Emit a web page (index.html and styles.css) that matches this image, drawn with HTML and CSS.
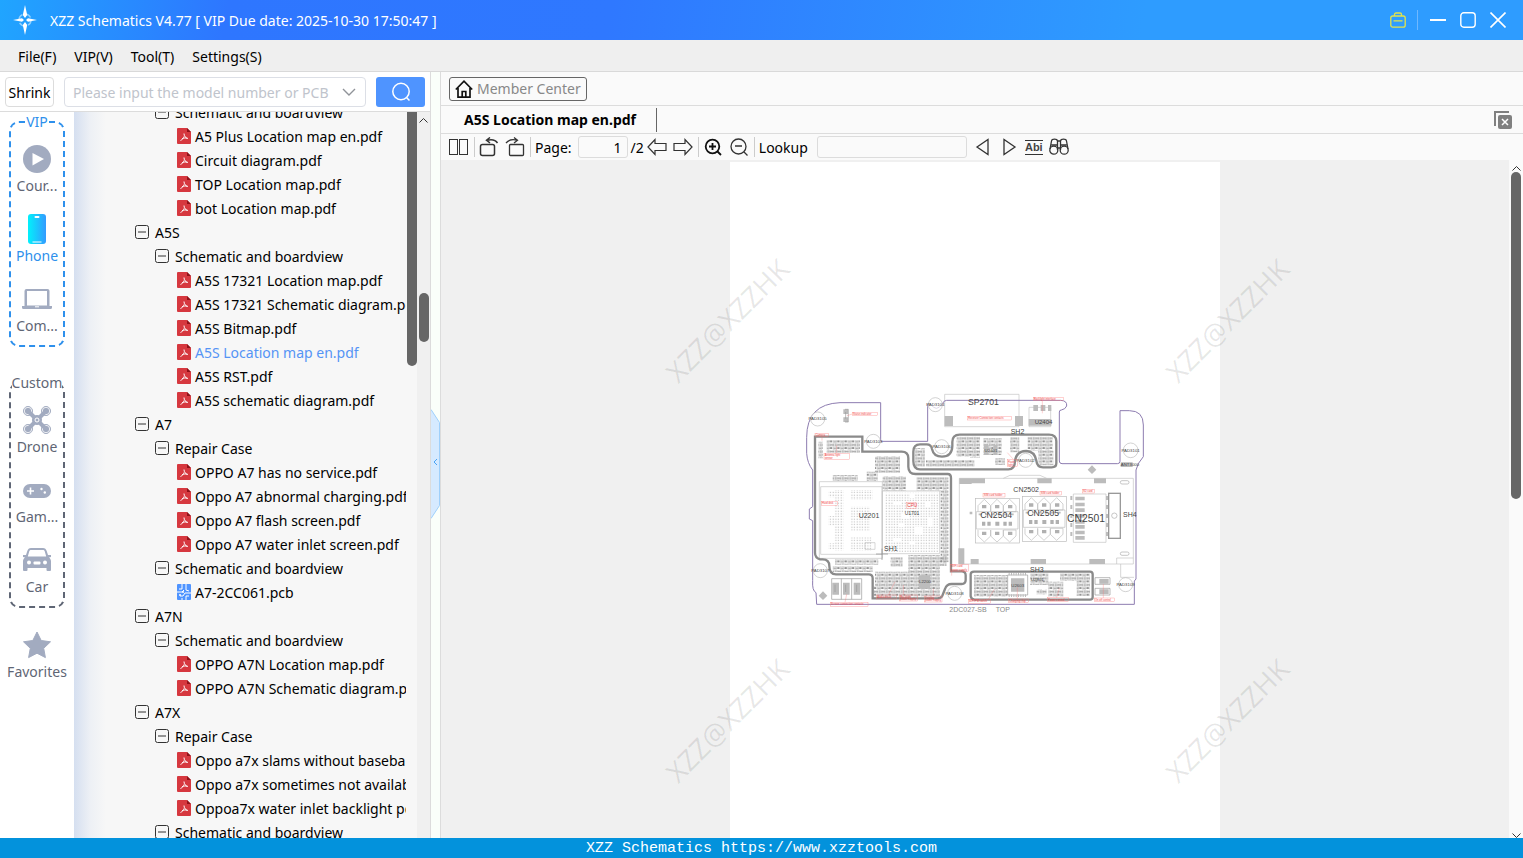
FILE: index.html
```html
<!DOCTYPE html>
<html lang="en">
<head>
    <meta charset="UTF-8">
    <meta name="viewport" content="width=device-width, initial-scale=1.0">
    <title>XZZ Schematics</title>
    <link rel="stylesheet" href="styles.css">
</head>
<body>
    <!-- shared icons -->
    <svg class="sprite" aria-hidden="true">
        <symbol id="pdf" viewBox="0 0 14 16">
            <path d="M1 0h9l4 4v11a1 1 0 0 1-1 1H1a1 1 0 0 1-1-1V1a1 1 0 0 1 1-1z" fill="#d6383f"/>
            <path d="M10 0l4 4h-4z" fill="#8e1219"/>
            <path d="M7 5.500c0 2.500 1.500 4.500 4 5M7 8.500c-.5 1.500-1.500 3-3.500 4M5 10.800c2-.9 3.500-1 5-.6" fill="none" stroke="#fff"/>
        </symbol>
        <symbol id="pcb" viewBox="0 0 14 16">
            <rect width="14" height="16" rx="1" fill="#4f94ff"/>
            <path d="M5 0v5H2M9 0v6l3 1M0 8h5l2-2M14 9H8l-2 3H3M9 16v-4h3M5 16v-2" fill="none" stroke="#fff"/>
            <circle cx="6" cy="8" r="1" fill="#fff"/>
            <circle cx="3" cy="11" r="1" fill="#fff"/>
        </symbol>
        <symbol id="minus" viewBox="0 0 14 14">
            <rect x=".5" y=".5" width="13" height="13" rx="2" fill="none" stroke="#333"/>
            <path d="M3 7h8" stroke="#333"/>
        </symbol>
    </svg>

    <header class="titlebar">
        <svg class="logo" viewBox="0 0 26 30">
            <circle cx="13" cy="15" r="6" fill="none" stroke="#8fd0ff" stroke-width="1.500" stroke-dasharray="6 3.400"/>
            <path d="M13 0l2.200 10-2.200 3-2.200-3zM13 30l2.200-10-2.200-3-2.200 3zM1 15l9-1.800 2 1.800-2 1.800zM25 15l-9-1.800-2 1.800 2 1.800z" fill="#fff"/>
        </svg>
        <h1>XZZ Schematics V4.77 [ VIP Due date: 2025-10-30 17:50:47 ]</h1>
        <div class="window-buttons">
            <button type="button" class="kit" aria-label="Toolbox">
                <svg width="16" height="16" viewBox="0 0 16 16" fill="none" stroke="#e2e34b" stroke-width="1.300"><rect x=".8" y="4" width="14.400" height="11.200" rx="2"/><path d="M4.500 4V2.500A1.500 1.500 0 0 1 6 1h4a1.500 1.500 0 0 1 1.500 1.500V4M3.500 8.800h9"/></svg>
            </button>
            <button type="button" aria-label="Minimize">
                <svg width="16" height="16" viewBox="0 0 16 16" stroke="#fff" stroke-width="2"><path d="M0 8h16"/></svg>
            </button>
            <button type="button" aria-label="Maximize">
                <svg width="16" height="16" viewBox="0 0 16 16" fill="none" stroke="#fff" stroke-width="1.400"><rect x=".8" y=".8" width="14.400" height="14.400" rx="3"/></svg>
            </button>
            <button type="button" aria-label="Close">
                <svg width="16" height="16" viewBox="0 0 16 16" stroke="#fff" stroke-width="1.600"><path d="M.5.5l15 15M15.500.5l-15 15"/></svg>
            </button>
        </div>
    </header>

    <nav class="menubar">
        <a href="#">File(F)</a>
        <a href="#">VIP(V)</a>
        <a href="#">Tool(T)</a>
        <a href="#">Settings(S)</a>
    </nav>

    <main class="workspace">
        <section class="left">
            <form class="search">
                <button type="button" class="shrink">Shrink</button>
                <div class="combo">
                    <input type="text" aria-label="Model number" placeholder="Please input the model number or PCB">
                    <svg width="14" height="8" viewBox="0 0 14 8" fill="none" stroke="#909399" stroke-width="1.400"><path d="M1 1l6 6 6-6"/></svg>
                </div>
                <button type="button" class="go" aria-label="Search">
                    <svg width="20" height="20" viewBox="0 0 20 20" fill="none" stroke="#fff" stroke-width="1.500"><circle cx="10" cy="9.500" r="8.200"/><path d="M15.500 15.500l3 3"/></svg>
                </button>
            </form>

            <div class="browser">
                <div class="side">
                    <fieldset class="group vip">
                        <legend>VIP</legend>
                        <a href="#" class="item">
                            <svg viewBox="0 0 30 30"><circle cx="15" cy="15" r="14" fill="#a2abc0"/><path d="M10.500 9v12.500L22 15z" fill="#fff"/></svg>
                            Cour...
                        </a>
                        <a href="#" class="item active">
                            <svg viewBox="0 0 30 30">
                                <defs><linearGradient id="blue"><stop offset="0" stop-color="#02f1fb"/><stop offset="1" stop-color="#339bff"/></linearGradient></defs>
                                <rect x="6" y="0" width="18" height="30" rx="3" fill="url(#blue)"/>
                                <rect x="12.500" y="2" width="5" height="2" rx="1" fill="#fff"/>
                                <path d="M10.500 28h9" stroke="#fff"/>
                            </svg>
                            Phone
                        </a>
                        <a href="#" class="item">
                            <svg viewBox="0 0 30 30" fill="#a2abc0"><path d="M4.500 5h21a2 2 0 0 1 2 2v15h2.500v1.500a1.500 1.500 0 0 1-1.500 1.500h-27A1.500 1.500 0 0 1 0 23.500V22h2.500V7a2 2 0 0 1 2-2zM5 7v14.500h20V7z" fill-rule="evenodd"/><path d="M13 22.800h4" stroke="#fff"/></svg>
                            Com...
                        </a>
                    </fieldset>
                    <fieldset class="group">
                        <legend>Custom</legend>
                        <a href="#" class="item">
                            <svg viewBox="0 0 30 30" stroke="#a2abc0">
                                <g fill="#a2abc0"><circle cx="6" cy="6" r="4.500"/><circle cx="24" cy="6" r="4.500"/><circle cx="6" cy="24" r="4.500"/><circle cx="24" cy="24" r="4.500"/></g>
                                <g fill="none" stroke="#fff" stroke-width=".8"><circle cx="6" cy="6" r="3.700"/><circle cx="24" cy="6" r="3.700"/><circle cx="6" cy="24" r="3.700"/><circle cx="24" cy="24" r="3.700"/></g>
                                <path d="M6 6l18 18M24 6L6 24" stroke-width="4"/>
                                <circle cx="15" cy="15" r="4.500" fill="#a2abc0"/><circle cx="15" cy="15" r="2" fill="#a2abc0" stroke="#fff"/>
                            </svg>
                            Drone
                        </a>
                        <a href="#" class="item">
                            <svg viewBox="0 0 30 30"><rect x="1" y="9" width="28" height="14" rx="7" fill="#a2abc0"/><path d="M8.500 12.500v7M5 16h7" stroke="#fff" stroke-width="1.600"/><circle cx="19.500" cy="14" r="1.200" fill="#fff"/><circle cx="22.800" cy="17.500" r="1.200" fill="#fff"/></svg>
                            Gam...
                        </a>
                        <a href="#" class="item">
                            <svg viewBox="0 0 30 30" fill="#a2abc0">
                                <path d="M9 3h12c2 0 3 1 3.700 3l1.300 4h3v2l-2 .5c1.300 1 2 2 2 4V25a1 1 0 0 1-1 1h-2.500a1 1 0 0 1-1-1v-2h-19v2a1 1 0 0 1-1 1H2a1 1 0 0 1-1-1v-8.500c0-2 .7-3 2-4L1 12v-2h3l1.300-4C6 4 7 3 9 3zm0 2C8 5 7.500 5.500 7.200 6.500L5.800 11.500h18.400l-1.400-5C22.500 5.500 22 5 21 5z" fill-rule="evenodd"/>
                                <g fill="#fff"><circle cx="7" cy="17.500" r="2"/><circle cx="23" cy="17.500" r="2"/><rect x="11.500" y="16.500" width="7" height="3" rx="1"/></g>
                            </svg>
                            Car
                        </a>
                    </fieldset>
                    <a href="#" class="item favorites">
                        <svg viewBox="0 0 30 30"><path d="M15 2l4.200 8.500 9.300 1.300-6.800 6.500 1.700 9.300L15 23.200l-8.400 4.400 1.700-9.300-6.800-6.500 9.300-1.300z" fill="#a2abc0" stroke="#a2abc0" stroke-linejoin="round"/></svg>
                        Favorites
                    </a>
                </div>

                <div class="tree">
                    <ul>
                        <li class="folder"><button type="button"><svg><use href="#minus"/></svg>Schematic and boardview</button></li>
                        <li class="file"><a href="#"><svg><use href="#pdf"/></svg>A5 Plus Location map en.pdf</a></li>
                        <li class="file"><a href="#"><svg><use href="#pdf"/></svg>Circuit diagram.pdf</a></li>
                        <li class="file"><a href="#"><svg><use href="#pdf"/></svg>TOP Location map.pdf</a></li>
                        <li class="file"><a href="#"><svg><use href="#pdf"/></svg>bot Location map.pdf</a></li>
                        <li class="model"><button type="button"><svg><use href="#minus"/></svg>A5S</button></li>
                        <li class="folder"><button type="button"><svg><use href="#minus"/></svg>Schematic and boardview</button></li>
                        <li class="file"><a href="#"><svg><use href="#pdf"/></svg>A5S 17321 Location map.pdf</a></li>
                        <li class="file"><a href="#"><svg><use href="#pdf"/></svg>A5S 17321 Schematic diagram.pdf</a></li>
                        <li class="file"><a href="#"><svg><use href="#pdf"/></svg>A5S Bitmap.pdf</a></li>
                        <li class="file selected"><a href="#"><svg><use href="#pdf"/></svg>A5S Location map en.pdf</a></li>
                        <li class="file"><a href="#"><svg><use href="#pdf"/></svg>A5S RST.pdf</a></li>
                        <li class="file"><a href="#"><svg><use href="#pdf"/></svg>A5S schematic diagram.pdf</a></li>
                        <li class="model"><button type="button"><svg><use href="#minus"/></svg>A7</button></li>
                        <li class="folder"><button type="button"><svg><use href="#minus"/></svg>Repair Case</button></li>
                        <li class="file"><a href="#"><svg><use href="#pdf"/></svg>OPPO A7 has no service.pdf</a></li>
                        <li class="file"><a href="#"><svg><use href="#pdf"/></svg>Oppo A7 abnormal charging.pdf</a></li>
                        <li class="file"><a href="#"><svg><use href="#pdf"/></svg>Oppo A7 flash screen.pdf</a></li>
                        <li class="file"><a href="#"><svg><use href="#pdf"/></svg>Oppo A7 water inlet screen.pdf</a></li>
                        <li class="folder"><button type="button"><svg><use href="#minus"/></svg>Schematic and boardview</button></li>
                        <li class="file"><a href="#"><svg><use href="#pcb"/></svg>A7-2CC061.pcb</a></li>
                        <li class="model"><button type="button"><svg><use href="#minus"/></svg>A7N</button></li>
                        <li class="folder"><button type="button"><svg><use href="#minus"/></svg>Schematic and boardview</button></li>
                        <li class="file"><a href="#"><svg><use href="#pdf"/></svg>OPPO A7N Location map.pdf</a></li>
                        <li class="file"><a href="#"><svg><use href="#pdf"/></svg>OPPO A7N Schematic diagram.pdf</a></li>
                        <li class="model"><button type="button"><svg><use href="#minus"/></svg>A7X</button></li>
                        <li class="folder"><button type="button"><svg><use href="#minus"/></svg>Repair Case</button></li>
                        <li class="file"><a href="#"><svg><use href="#pdf"/></svg>Oppo a7x slams without baseband.pdf</a></li>
                        <li class="file"><a href="#"><svg><use href="#pdf"/></svg>Oppo a7x sometimes not available.pdf</a></li>
                        <li class="file"><a href="#"><svg><use href="#pdf"/></svg>Oppoa7x water inlet backlight pdf</a></li>
                        <li class="folder"><button type="button"><svg><use href="#minus"/></svg>Schematic and boardview</button></li>
                    </ul>
                </div>
                <div class="inner-bar"><span></span></div>
                <div class="scrollbar">
                    <svg width="9" height="5" viewBox="0 0 9 5" fill="none" stroke="#333"><path d="M.5 4.500l4-4 4 4"/></svg>
                    <span class="thumb"></span>
                </div>
            </div>
        </section>

        <div class="splitter">
            <button type="button" aria-label="Collapse">
                <svg width="9" height="110" viewBox="0 0 9 110"><path d="M0 .5l8.500 13v83L0 109.500" fill="#d6eaff" stroke="#9fd0fb"/><path d="M6 50l-3 3 3 3" fill="none" stroke="#4aa3f5"/></svg>
            </button>
        </div>

        <section class="right">
            <div class="member-row">
                <button type="button" class="member">
                    <svg width="18" height="18" viewBox="0 0 18 18" fill="none" stroke="#111" stroke-width="1.700"><path d="M.8 9.500L9 1.200l8.200 8.300M3 8v9.200h12V8M7.200 17v-5.500h3.600V17"/></svg>
                    Member Center
                </button>
            </div>
            <div class="tabs">
                <a href="#" class="tab">A5S Location map en.pdf</a>
                <button type="button" class="close-all" aria-label="Close all">
                    <svg width="18" height="18" viewBox="0 0 18 18"><path d="M1 15V1h14" fill="none" stroke="#808080" stroke-width="2"/><rect x="4" y="4" width="14" height="14" rx="2" fill="#808080"/><path d="M8 8l6 6M14 8l-6 6" stroke="#fff" stroke-width="1.500"/></svg>
                </button>
            </div>
            <div class="toolbar">
                <button type="button" aria-label="Two pages">
                    <svg width="20" height="20" viewBox="0 0 20 20" fill="none" stroke="#333"><rect x=".5" y="2.500" width="8" height="15"/><rect x="10.500" y="2.500" width="8" height="15"/></svg>
                </button>
                <i></i>
                <button type="button" aria-label="Rotate left">
                    <svg width="20" height="20" viewBox="0 0 20 20" fill="none" stroke="#333" stroke-width="1.500"><rect x="1.500" y="7.500" width="14" height="11" rx="2"/><path d="M18.500 6C17 3.500 13 2 8 3.200M11 .5L7.500 3.200 11 6"/></svg>
                </button>
                <button type="button" aria-label="Rotate right">
                    <svg width="20" height="20" viewBox="0 0 20 20" fill="none" stroke="#333" stroke-width="1.300"><rect x="4.500" y="7.500" width="14" height="11" rx="1"/><path d="M1 6C3 3.500 7 2 12 3.200M9 .5l3.500 2.700L9 6"/></svg>
                </button>
                <i></i>
                <label for="page">Page:</label>
                <input type="text" id="page" class="page-no" value="1">
                <span>/2</span>
                <button type="button" aria-label="Previous page">
                    <svg width="20" height="20" viewBox="0 0 20 20" fill="none" stroke="#333" stroke-width="1.200"><path d="M1 10l7-7.500v4h11v7H8v4z"/></svg>
                </button>
                <button type="button" aria-label="Next page">
                    <svg width="20" height="20" viewBox="0 0 20 20" fill="none" stroke="#333" stroke-width="1.200"><path d="M19 10l-7-7.500v4H1v7h11v4z"/></svg>
                </button>
                <i></i>
                <button type="button" aria-label="Zoom in">
                    <svg width="20" height="20" viewBox="0 0 20 20" fill="none" stroke="#111" stroke-width="1.800"><circle cx="9.500" cy="9.500" r="6.800"/><path d="M14.500 14.500l3.500 3.500M6 9.500h7M9.500 6v7"/></svg>
                </button>
                <button type="button" aria-label="Zoom out">
                    <svg width="20" height="20" viewBox="0 0 20 20" fill="none" stroke="#333" stroke-width="1.300"><circle cx="9.500" cy="9.500" r="7.500"/><path d="M15 15l3.500 3.500M6 9h7"/></svg>
                </button>
                <i></i>
                <label for="lookup">Lookup</label>
                <input type="text" id="lookup" class="lookup">
                <button type="button" aria-label="Find previous">
                    <svg width="20" height="20" viewBox="0 0 20 20" fill="none" stroke="#333" stroke-width="1.300"><path d="M4 10L15 2.500v15z"/></svg>
                </button>
                <button type="button" aria-label="Find next">
                    <svg width="20" height="20" viewBox="0 0 20 20" fill="none" stroke="#333" stroke-width="1.300"><path d="M16 10L5 2.500v15z"/></svg>
                </button>
                <button type="button" class="abi">Abi</button>
                <button type="button" aria-label="Find all">
                    <svg width="20" height="20" viewBox="0 0 20 20" fill="none" stroke="#333" stroke-width="1.300"><circle cx="4.800" cy="13.200" r="4"/><circle cx="15.200" cy="13.200" r="4"/><path d="M1 12L2.500 4C3 1.500 8 1.500 8.500 4v9M19 12l-1.500-8C17 1.500 12 1.500 11.500 4v9M8.500 4h3M8.500 11h3M2.500 8h6M11.500 8h6"/></svg>
                </button>
            </div>

            <div class="viewer">
                <div class="canvas">
                    <div class="sheet">
                        <!-- drawn at 3 units per pixel -->
                        <svg class="board" viewBox="0 0 1050 690">
                            <defs>
                                <pattern id="parts" width="22" height="20" patternUnits="userSpaceOnUse">
                                    <path d="M1 2h5v6H1zM9 2h5v6H9zM17 1h4v8h-4zM1 12h8v5H1zM12 12h3v6h-3zM18 12h3v6h-3z" fill="#aaa"/>
                                    <path d="M6 5h3M15 15h3M2 14h6" stroke="#555" stroke-width="2"/>
                                    <path d="M0 1h15v8H0zM11 11h11v8H11z" fill="none" stroke="#bbb"/>
                                </pattern>
                                <pattern id="balls" width="8" height="8" patternUnits="userSpaceOnUse"><rect x="2" y="2" width="3" height="3" fill="#b0b0b0"/></pattern>
                                <g id="sim">
                                    <rect x="0" y="0" width="132" height="134" fill="none" stroke="#bbb" stroke-width="2"/>
                                    <path d="M8 40V22L27 3l19 19v18M46 40V22L65 3l19 19v18M84 40V22l19-19 19 19v18zM8 95v18l19 18 19-18V95M46 95v18l19 18 19-18V95M84 95v18l19 18 19-18V95zM3 40h125v52H3z" fill="none" stroke="#bbb" stroke-width="2"/>
                                    <path d="M20 20h13v10H20zM59 20h13v10H59zM98 20h13v10H98zM20 100h13v10H20zM59 100h13v10H59zM98 100h13v10H98zM20 70h10v12H20zM36 70h10v12H36zM60 70h12v12H60zM84 70h10v12H84zM100 70h10v12h-10z" fill="#b0b0b0"/>
                                    <path d="M10 48h112" stroke="#bbb" stroke-width="5" stroke-dasharray="10 9"/>
                                </g>
                            </defs>

                            <g fill="url(#parts)">
                                <path d="M55 155h14v50H55zM80 150h100v38H80zM225 198h75v50h-75zM345 175h30v55h-30zM98 255h75v18H98zM200 245h33v28h-33zM248 258h70v45h-70zM350 262h95v40h-95zM422 302h23v215h-23z"/>
                                <path d="M105 508h130v16H105zM98 528h120v18H98zM272 502h36v28h-36zM225 545h100v68H225zM325 495h95v125h-95zM380 498h60v30h-60zM220 588h110v35H220z"/>
                                <path d="M378 210h145v20H378zM470 140h70v60h-70zM510 175h30v28h-30zM550 145h55v50h-55zM585 205h30v20h-30zM630 142h28v45h-28zM683 140h75v42h-75zM715 182h45v44h-45z"/>
                                <path d="M522 555h100v65H522zM690 550h55v35H690zM710 598h30v15h-30zM745 575h45v45h-45zM780 550h90v22h-90zM830 570h40v48h-40z"/>
                            </g>

                            <!-- BGA chips -->
                            <g fill="none" stroke="#c2c2c2" stroke-width="2">
                                <path d="M58 275h189v230H58zM62 290h184v203H62zM195 458h30v20h-30zM247 303h172v188H247z"/>
                                <path d="M434 13h223v97H434zM687 52h65v58h-65z"/>
                                <path d="M478 265h522v257H478zM610 265l20-9h90l20 9M820 312h98v145h-98zM950 522v-18h50M962 522v40h40"/>
                            </g>
                            <g fill="url(#balls)">
                                <path d="M104 300h26v182h-26zM152 300h66v30h-66zM152 350h58v72h-58zM152 442h64v40h-64zM86 304h18v18H86zM86 378h18v30H86zM86 460h18v18H86zM255 308h160v178H255z"/>
                            </g>
                            <g fill="#fff"><path d="M304 370h24v16h-24zM345 410h24v24h-24zM375 335h16v16h-16zM280 336h24v10h-24zM296 400h18v12h-18zM280 444h24v10h-24zM328 452h18v10h-18zM384 380h14v30h-14zM330 312h14v12h-14z"/></g>
                            <path d="M228 492h36M246 476v34" stroke="#888" stroke-width="2"/>

                            <!-- pads and contacts -->
                            <g fill="#bcbcbc">
                                <path d="M434 78h25v30h-25zM645 78h24v30h-24zM478 265h37v17h-37zM515 265h40v15h-40zM712 265h43v15h-43zM882 265h36v15h-36zM475 475h18v47h-18zM512 507h24v15h-24zM692 507h46v15h-46zM868 507h47v15h-47z"/>
                                <path d="M700 45h14v18h-14zM722 45h14v18h-14zM744 45h10v18h-10zM686 87h68v20h-68zM130 58h14v14h-14zM130 82h14v14h-14zM552 165h14v30h-14zM580 165h12v30h-12z"/>
                                <path d="M826 320h28v11h-28zM826 338h28v11h-28zM826 355h28v11h-28zM826 372h28v11h-28zM826 390h28v11h-28zM826 405h28v11h-28zM826 422h28v11h-28zM826 438h28v11h-28z"/>
                                <path d="M811 318h6v12h-6zM811 345h6v12h-6zM811 372h6v12h-6zM811 399h6v12h-6zM811 426h6v12h-6zM918 318h6v12h-6zM918 345h6v12h-6zM918 372h6v12h-6zM918 399h6v12h-6zM918 426h6v12h-6z"/>
                                <path d="M97 578h20v36H97zM129 578h20v36h-20zM161 578h20v36h-20zM633 565h40v40h-40zM356 556h34v40h-34zM898 567h28v14h-28zM898 598h28v14h-28zM962 217h36v14h-36z"/>
                                <path d="M69 604l13 13-13 13-13-13zM876 226l13 13-13 13-13-13zM509 365h8v8h-8z"/>
                            </g>
                            <path d="M95 566h90v62H95zM124 566v62M155 566v62M105 584v22M137 584v22M170 584v22M135 58h10v38h-10M137 66v20M623 555h60v60h-60zM885 563h45v20h-45zM885 595h45v20h-45z" fill="none" stroke="#999" stroke-width="2"/>
                            <path d="M626 552h54M626 617h54" stroke="#bbb" stroke-width="8" stroke-dasharray="3 4"/>
                            <use href="#sim" x="526" y="325"/>
                            <use href="#sim" x="667" y="320"/>
                            <rect x="926" y="310" width="35" height="135" fill="none" stroke="#999" stroke-width="4"/>
                            <g fill="none" stroke="#aaa" stroke-width="2"><circle cx="943" cy="377" r="8"/><rect x="961" y="272" width="26" height="10" rx="5"/><rect x="961" y="486" width="26" height="10" rx="5"/></g>

                            <!-- shields -->
                            <g fill="none" stroke="#8a8a8a" stroke-width="7">
                                <path d="M45 140h142v45h118q20 0 20 20v25q0 22 22 22h96q10 0 10 12v280h32q12 0 12 12v14q0 12-12 12h-30q-15 0-20 15l-8 20q-4 8-15 8H218v-60q0-12-12-12H108q-20 0-20-25 0-20-20-20h-8q-15-5-15-20z"/>
                                <path d="M340 185q0-22 20-22h20q14 0 16 14 5 23 30 23 30 0 31-32v-12q0-22 22-22h268q22 0 22 20v66q0 12-14 12h-26q-18 0-20-20-5-28-30-29-30 0-34 30 0 25-20 25H360q-20 0-20-25z"/>
                                <path d="M522 545h348q8 0 8 8v68q0 8-8 8H524q-10 0-12-10v-66q0-8 10-8z"/>
                            </g>

                            <!-- board outline -->
                            <path d="M50 643h953v-70l5-6V240q4-20 22-40v-95q0-43-42-43h-28v152q0 7-8 7H786q-8 0-8-8V66q0-6 6-6 12-2 16-12 2-16-18-17H440q-8 0-13 10-18 28-36 0-8-4-8 8v105H242V38H120Q20 42 20 142v48q2 30 18 50v110l-10 7v30l10 5v180q-2 30 10 36z" fill="none" stroke="#8d7cb0" stroke-width="3"/>

                            <g fill="#fff" fill-opacity=".7" stroke="#bbb" stroke-width="2">
                                <circle cx="53" cy="87" r="21"/><circle cx="220" cy="154" r="21"/><circle cx="406" cy="44" r="21"/><circle cx="425" cy="170" r="21"/><circle cx="61" cy="542" r="21"/><circle cx="464" cy="610" r="21"/><circle cx="677" cy="211" r="21"/><circle cx="992" cy="181" r="22"/><circle cx="977" cy="584" r="21"/>
                            </g>

                            <g class="part-names">
                                <g font-size="13" text-anchor="middle">
                                    <text x="53" y="91">PAD3105</text><text x="220" y="158">PAD3103</text><text x="406" y="48">PAD3104</text><text x="425" y="174">PAD3106</text><text x="61" y="546">PAD3107</text><text x="464" y="615">PAD3108</text><text x="677" y="215">PAD3102</text><text x="992" y="186">PAD3101</text><text x="977" y="588">PAD3109</text><text x="990" y="228">ANT3000</text>
                                    <text x="375" y="580">L2200</text><text x="573" y="186">U2401</text><text x="653" y="590">U2603</text><text x="712" y="574">U2801</text>
                                </g>
                                <text x="176" y="383" font-size="21">U2201</text>
                                <text x="314" y="376" font-size="15">U1701</text>
                                <text x="252" y="482" font-size="21">SH1</text>
                                <text x="504" y="44" font-size="26">SP2701</text>
                                <text x="632" y="131" font-size="21">SH2</text>
                                <text x="704" y="102" font-size="18">U2404</text>
                                <text x="640" y="305" font-size="21">CN2502</text>
                                <text x="541" y="383" font-size="26">CN2504</text>
                                <text x="682" y="378" font-size="26">CN2505</text>
                                <text x="801" y="395" font-size="31">CN2501</text>
                                <text x="969" y="380" font-size="21">SH4</text>
                                <text x="690" y="547" font-size="21">SH3</text>
                                <text x="448" y="665" font-size="21" fill="#888">2DC027-SB</text>
                                <text x="587" y="665" font-size="21" fill="#888">TOP</text>
                            </g>

                            <!-- red notes -->
                            <g class="notes">
                                <rect x="157" y="67" width="75" height="10"/><rect x="45" y="131" width="40" height="9"/><rect x="72" y="190" width="76" height="18"/><rect x="64" y="334" width="48" height="12"/><rect x="320" y="337" width="28" height="18"/>
                                <rect x="91" y="637" width="113" height="12"/><rect x="230" y="615" width="60" height="12"/><rect x="299" y="615" width="54" height="18"/><rect x="374" y="618" width="52" height="18"/><rect x="452" y="523" width="54" height="22"/>
                                <rect x="503" y="80" width="131" height="10"/><rect x="700" y="22" width="91" height="10"/><rect x="622" y="208" width="30" height="22"/><rect x="549" y="310" width="66" height="11"/><rect x="720" y="305" width="65" height="10"/><rect x="847" y="298" width="36" height="11"/>
                                <rect x="505" y="628" width="66" height="12"/><rect x="626" y="627" width="59" height="10"/><rect x="743" y="623" width="63" height="11"/><rect x="883" y="624" width="61" height="10"/>
                                <path d="M157 72l-16 5M66 140v12M110 190v-24M135 637l5-24M727 32v38M640 208l-18-20M565 628l18-30M652 627v-35M770 623l8-28M910 624v-42M265 615l20-40M310 615v-30M400 618v-22M455 545v12"/>
                                <g class="note-text">
                                    <text x="159" y="76">Status indicator</text><text x="47" y="139">Camera</text><text x="74" y="198">Antenna light</text><text x="74" y="206">sensor</text><text x="66" y="343">Hard disk</text><text x="322" y="351" font-size="14">CPU</text>
                                    <text x="93" y="646">Screen connection contacts</text><text x="232" y="624">Audio driver</text><text x="301" y="623">Backlight</text><text x="301" y="631">power supply</text><text x="376" y="626">Display</text><text x="376" y="634">power supply</text><text x="454" y="532">WiFi card</text><text x="454" y="542">power supply</text>
                                    <text x="505" y="88">Receiver Connection contacts</text><text x="702" y="30">Backlight interface</text><text x="624" y="218">Flash</text><text x="624" y="227">light</text><text x="551" y="319">SIM card holder</text><text x="722" y="313">SIM card holder</text><text x="849" y="307">SD card</text>
                                    <text x="507" y="637">WiFi/FM switch</text><text x="628" y="635">Charging chip</text><text x="745" y="632">Power control</text><text x="885" y="632">On off control</text>
                                </g>
                            </g>
                        </svg>
                    </div>
                    <div class="watermarks" aria-hidden="true">
                        <span>XZZ@XZZHK</span>
                        <span>XZZ@XZZHK</span>
                        <span>XZZ@XZZHK</span>
                        <span>XZZ@XZZHK</span>
                    </div>
                </div>
                <div class="scrollbar doc">
                    <svg width="9" height="5" viewBox="0 0 9 5" fill="none" stroke="#333"><path d="M.5 4.500l4-4 4 4"/></svg>
                    <span class="thumb"></span>
                    <svg class="down" width="9" height="5" viewBox="0 0 9 5" fill="none" stroke="#333"><path d="M.5.5l4 4 4-4"/></svg>
                </div>
            </div>
        </section>
    </main>

    <footer class="footer">XZZ Schematics https://www.xzztools.com</footer>
</body>
</html>
```

FILE: styles.css
```css
* {
    box-sizing: border-box;
}
body {
    margin: 0;
    height: 100vh;
    display: flex;
    flex-direction: column;
    overflow: hidden;
    font-family: "Noto Sans", sans-serif;
    font-size: 14px;
    color: #000;
    background: #fafafa;
}
button, input {
    font: inherit;
    color: inherit;
}
button {
    padding: 0;
    border: none;
    background: none;
}
a {
    color: inherit;
    text-decoration: none;
}
svg {
    flex: none;
    display: block;
}
.sprite {
    position: absolute;
    width: 0;
    height: 0;
}

/* Title bar */
.titlebar {
    flex: none;
    height: 40px;
    display: flex;
    align-items: center;
    padding: 0 17px 0 12px;
    color: #fff;
    background: linear-gradient(100deg, #20a5ff 0%, #2e76ff 15%, #2f78ff 40%, #2e9cff 75%, #2e9cff 100%);
}
.logo {
    width: 26px;
    height: 30px;
    margin-right: 12px;
}
.titlebar h1 {
    margin: 0;
    font-size: 14px;
    font-weight: normal;
}
.window-buttons {
    margin-left: auto;
    display: flex;
    align-items: center;
    gap: 14px;
}
.kit {
    height: 20px;
    padding-right: 11px;
    margin-right: -2px;
    border-right: 1px solid #6fb8ff;
}

/* Menu */
.menubar {
    flex: none;
    height: 32px;
    display: flex;
    align-items: center;
    gap: 18px;
    padding: 2px 18px 0;
    background: #efefef;
    border-bottom: 1px solid #d9d9d9;
}

.workspace {
    flex: 1;
    min-height: 0;
    display: flex;
}

/* Left panel */
.left {
    flex: none;
    width: 431px;
    display: flex;
    flex-direction: column;
    background: #fff;
    border-right: 1px solid #dcdcdc;
}
.search {
    flex: none;
    height: 40px;
    display: flex;
    align-items: center;
    gap: 10px;
    padding: 0 5px;
    border-bottom: 1px solid #dcdcdc;
}
.shrink {
    width: 49px;
    height: 30px;
    padding-top: 1px;
    border: 1px solid #dcdcdc;
    border-radius: 4px;
}
.combo {
    flex: 1;
    height: 30px;
    display: flex;
    align-items: center;
    padding: 0 9px 0 8px;
    border: 1px solid #dcdfe6;
    border-radius: 4px;
}
.combo input {
    flex: 1;
    min-width: 0;
    padding: 1px 0 0;
    border: none;
    outline: none;
    background: none;
}
.combo input::placeholder {
    color: #c0c4cc;
}
.go {
    width: 49px;
    height: 30px;
    display: flex;
    align-items: center;
    justify-content: center;
    border-radius: 3px;
    background: #4f94ff;
}
.browser {
    flex: 1;
    min-height: 0;
    display: flex;
}

/* Categories */
.side {
    flex: none;
    width: 74px;
    color: #5f6675;
}
.group {
    min-width: 0;
    margin: 0 9px 26px;
    padding: 0 0 3px;
    border: 2px dashed #5f6675;
    border-radius: 10px;
}
.group legend {
    height: 20px;
    margin: 0 auto;
    padding: 0;
    line-height: 20px;
}
.group.vip {
    border-color: #2e90ec;
}
.vip legend, .item.active {
    color: #2e90ec;
}
.item {
    height: 70px;
    display: flex;
    flex-direction: column;
    align-items: center;
    padding-top: 12px;
    line-height: 24px;
    white-space: nowrap;
}
.item svg {
    width: 30px;
    height: 30px;
}
.favorites {
    margin-top: -16px;
}

/* File tree */
.tree {
    flex: 1;
    min-width: 0;
    overflow: hidden;
    background: linear-gradient(to right, #d5dff0, #edf0f5 16px, #f7f7f7 32px);
}
.tree ul {
    list-style: none;
    margin: -12px 1px 0 0;
    padding: 0;
}
.tree li {
    height: 24px;
    overflow: hidden;
    white-space: nowrap;
}
.tree button, .tree a {
    height: 24px;
    display: flex;
    align-items: center;
}
.tree button svg {
    width: 14px;
    height: 14px;
    margin-right: 6px;
}
.tree a svg {
    width: 14px;
    height: 16px;
    margin-right: 4px;
}
.model {
    padding-left: 61px;
}
.folder {
    padding-left: 81px;
}
.file {
    padding-left: 103px;
}
.selected {
    color: #5594f5;
}
.inner-bar {
    width: 10px;
    background: #f7f7f7;
}
.inner-bar span {
    display: block;
    height: 35%;
    background: #666;
    border-radius: 0 0 5px 5px;
}
.scrollbar {
    flex: none;
    width: 13px;
    display: flex;
    flex-direction: column;
    align-items: center;
    padding-top: 6px;
    background: #f0f0f0;
}
.scrollbar .thumb {
    width: 10px;
    height: 49px;
    margin-top: 170px;
    border-radius: 5px;
    background: #666;
}

/* Splitter */
.splitter {
    flex: none;
    width: 9px;
    display: flex;
    align-items: center;
    padding-top: 18px;
    background: #fafffa;
}

/* Right panel */
.right {
    flex: 1;
    min-width: 0;
    display: flex;
    flex-direction: column;
    border-left: 1px solid #dcdcdc;
}
.member-row {
    flex: none;
    height: 34px;
    display: flex;
    align-items: center;
    padding-left: 8px;
    border-bottom: 1px solid #dcdcdc;
}
.member {
    height: 24px;
    display: flex;
    align-items: center;
    gap: 4px;
    padding: 0 5px;
    color: #888;
    border: 1px solid #666;
    border-radius: 3px;
}
.tabs {
    flex: none;
    height: 28px;
    display: flex;
    align-items: center;
    justify-content: space-between;
    padding: 0 11px 0 7px;
    border-bottom: 1px solid #dcdcdc;
}
.tab {
    padding: 0 20px 0 16px;
    line-height: 24px;
    font-weight: bold;
    border-right: 1px solid #666;
}
.toolbar {
    flex: none;
    height: 26px;
    display: flex;
    align-items: center;
    gap: 6px;
    padding-left: 8px;
}
.toolbar i {
    width: 1px;
    height: 20px;
    margin: 0 -2px 0 -1px;
    background: #ccc;
}
.toolbar input {
    height: 22px;
    border: 1px solid #dcdcdc;
    border-radius: 3px;
    background: #fafafa;
}
.toolbar .page-no {
    width: 50px;
    text-align: right;
    padding-right: 5px;
}
.toolbar .page-no + span {
    margin: 0 -3px;
}
.toolbar .lookup {
    width: 150px;
    margin-left: 3px;
}
.abi {
    width: 18px;
    height: 15px;
    line-height: 13px;
    font-family: "Liberation Sans", sans-serif;
    font-size: 11px;
    font-weight: bold;
    color: #444;
    border-top: 1px solid #333;
    border-bottom: 1px solid #333;
}

/* Document */
.viewer {
    flex: 1;
    min-height: 0;
    display: flex;
}
.canvas {
    flex: 1;
    position: relative;
    overflow: hidden;
    padding-top: 2px;
    background: #f0f0f0;
}
.sheet {
    width: 490px;
    height: 100%;
    margin: 0 auto;
    padding-top: 228px;
    background: #fff;
}
.board {
    width: 350px;
    height: 230px;
    margin: 0 auto;
    font-family: "Liberation Sans", sans-serif;
}
.part-names {
    fill: #444;
}
.notes {
    fill: none;
    stroke: #f77;
}
.note-text {
    fill: #e44;
    stroke: none;
    font-size: 8px;
}
/* stamped over the page and the canvas round it */
.watermarks {
    position: absolute;
    top: 140px;
    left: 50%;
    display: grid;
    grid-template-columns: 200px 200px;
    gap: 360px 300px;
    margin-left: -348px;
    pointer-events: none;
}
.watermarks span {
    line-height: 40px;
    text-align: center;
    font-size: 28px;
    color: rgba(0, 0, 0, 0.09);
    transform: rotate(-45deg);
}
.scrollbar.doc {
    width: 14px;
    background: #fafafa;
}
.doc .thumb {
    height: 327px;
    margin-top: 1px;
}
.doc .down {
    margin-top: auto;
}

.footer {
    flex: none;
    height: 20px;
    line-height: 22px;
    text-align: center;
    font-family: "Liberation Mono", monospace;
    font-size: 15px;
    color: #fff;
    background: #0392dc;
}
```
